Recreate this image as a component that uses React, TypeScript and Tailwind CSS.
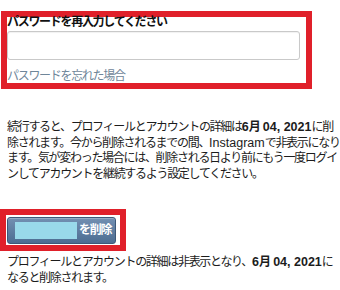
import React from 'react';

const Latin = ({ children, bold }: { children: React.ReactNode; bold?: boolean }) => (
  <span className={`text-[12.5px] tracking-normal ${bold ? 'font-bold' : ''}`}>{children}</span>
);

const App = () => {
  return (
    <div
      className="w-[340px] h-[290px] bg-white text-[#1c1c1c] text-[12px] tracking-[-1.3px] overflow-hidden"
      style={{ fontFamily: '"Liberation Sans", "Noto Sans CJK JP", sans-serif' }}
    >
      {/* パスワード入力 */}
      <div className="ml-[1px] mt-[11px] w-[311px] border-[6px] border-[#e0202a] flex flex-col">
        <label className="block font-bold leading-[11px] text-[#111] whitespace-nowrap">
          パスワードを再入力してください
        </label>
        <input
          type="password"
          className="mt-[3px] w-[293px] h-[29px] border border-[#c9c9c9] rounded-[3px] bg-white shadow-[inset_0_1px_1px_rgba(0,0,0,0.06)]"
        />
        <a href="#" className="mt-[10px] leading-[13px] text-[#6f8699] whitespace-nowrap">
          パスワードを忘れた場合
        </a>
      </div>

      {/* 説明文 */}
      <p className="mt-[31px] px-[7px] leading-[15.7px] whitespace-nowrap">
        続行すると、プロフィールとアカウントの詳細は<Latin bold>6</Latin><b>月</b><Latin bold> 04, 2021</Latin>に削
        <br />
        除されます。今から削除されるまでの間、<Latin>Instagram</Latin>で非表示になり
        <br />
        ます。気が変わった場合には、削除される日より前にもう一度ログイ
        <br />
        ンしてアカウントを継続するよう設定してください。
      </p>

      {/* 削除ボタン */}
      <div className="mt-[26px] w-[126px] border-[6px] border-[#e0202a] pl-[1px] pt-[2px] pb-[1px]">
        <button className="w-[109px] h-[27px] flex items-center pl-[7px] rounded-[3px] border border-[#3d5878] bg-gradient-to-b from-[#7390b2] to-[#4d6d92] shadow-[inset_0_1px_0_rgba(255,255,255,0.25)]">
          <span className="w-[62px] h-[17px] bg-[#99d9ea]" />
          <span className="ml-[2px] text-white font-bold text-[12px] leading-none">を削除</span>
        </button>
      </div>

      <p className="mt-[3px] px-[7px] leading-[16px] whitespace-nowrap">
        プロフィールとアカウントの詳細は非表示となり、<Latin bold>6</Latin><b>月</b><Latin bold> 04, 2021</Latin>に
        <br />
        なると削除されます。
      </p>
    </div>
  );
};

export default App;
